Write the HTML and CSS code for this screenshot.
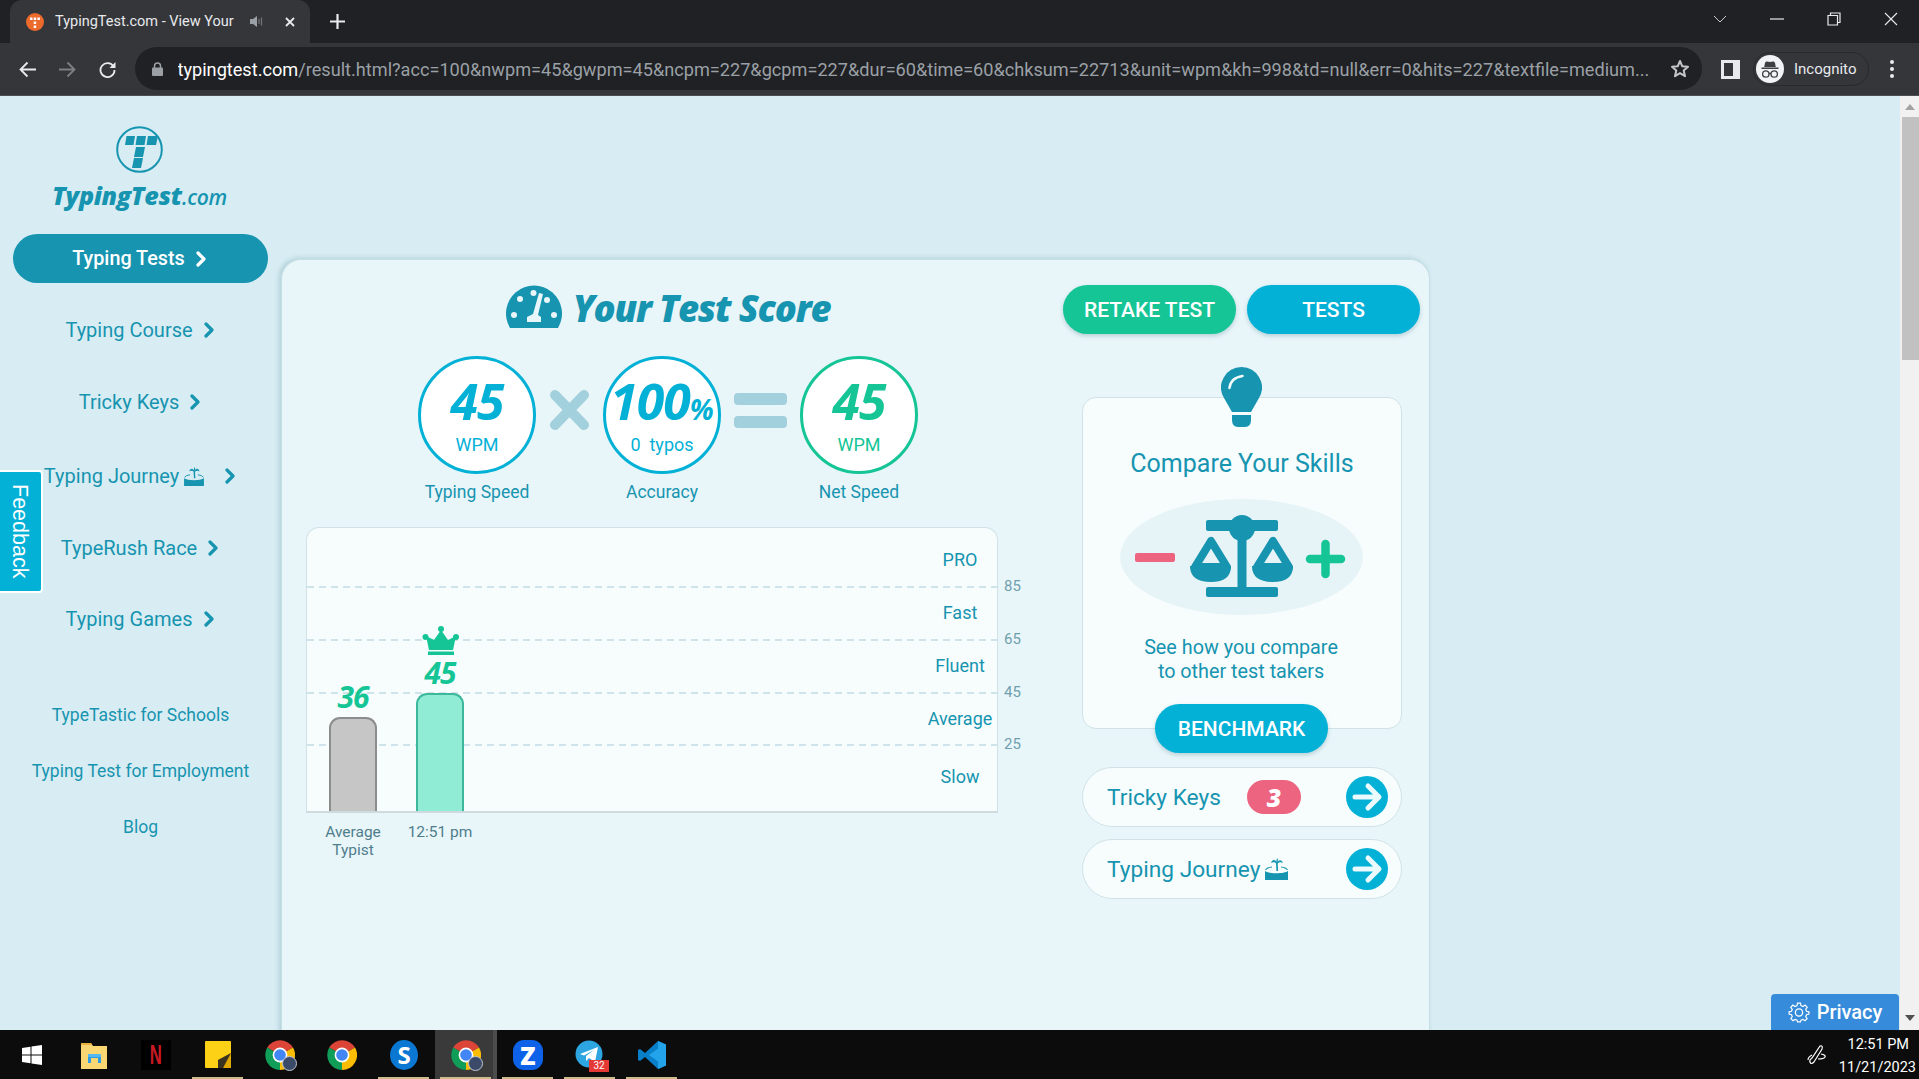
FILE: index.html
```html
<!DOCTYPE html>
<html lang="en">
<head>
<meta charset="utf-8">
<title>TypingTest.com - View Your Results</title>
<link rel="stylesheet" href="styles.css">
</head>
<body>
<svg class="defs" width="0" height="0" aria-hidden="true">
  <symbol id="chev" viewBox="0 0 10 16"><polyline points="2,2 8,8 2,14" fill="none" stroke="currentColor" stroke-width="3.2" stroke-linecap="round" stroke-linejoin="round"/></symbol>
  <symbol id="island" viewBox="0 0 23 22">
    <path d="M0 13C4 16 19 16 23 13V22H0Z" fill="#1694b0"/>
    <path d="M.5 12Q2 9.500 7 9M22.500 12Q21 9.500 16 9" fill="none" stroke="#1694b0" stroke-width="1.100"/>
    <path d="M11.800 5L12.300 13" stroke="#1694b0" stroke-width="1.700" fill="none"/>
    <path d="M12 4.500C10 1 7 1.500 6 5C8 3.800 10 4.200 12 6C14 4.200 16 3.800 18 5.200C17 1.500 14 1 12 4.500ZM12 4.500C11.300 3 11.300 1.500 12.300 0C13.200 1.500 13 3 12 4.500Z" fill="#1694b0"/>
  </symbol>
  <symbol id="arrow" viewBox="0 0 42 42">
    <circle cx="21" cy="21" r="21" fill="#03b1d7"/>
    <path d="M9 21H32M22 10L33 21L22 32" fill="none" stroke="#eafafd" stroke-width="5" stroke-linecap="round" stroke-linejoin="round"/>
  </symbol>
  <symbol id="chrome" viewBox="0 0 30 30">
    <path d="M15 15L2.200 7.600A15 15 0 0 1 28 7.500Z" fill="#db4437"/>
    <path d="M15 15L28 7.500A15 15 0 0 1 15 30Z" fill="#fbbc04"/>
    <path d="M15 15L15 30A15 15 0 0 1 2.200 7.600Z" fill="#0f9d58"/>
    <circle cx="15" cy="15" r="7.400" fill="#fff"/>
    <circle cx="15" cy="15" r="5.800" fill="#4285f4"/>
  </symbol>
</svg>

<div class="window">
  <header class="tabstrip">
    <div class="tab">
      <svg class="favicon" viewBox="0 0 18 18"><circle cx="9" cy="9" r="9" fill="#ec6a2c"/><g fill="#fff"><rect x="4" y="4.500" width="2.500" height="2.500"/><rect x="7.700" y="4.500" width="2.500" height="2.500"/><rect x="11.400" y="4.500" width="2.500" height="2.500"/><rect x="7.700" y="8.500" width="2.500" height="2.500"/><rect x="7.700" y="12.500" width="2.500" height="2.500"/></g></svg>
      <span class="tab-title">TypingTest.com - View Your</span>
      <svg class="speaker" viewBox="0 0 13 13"><path d="M0 4H3L7 1V12L3 9H0Z" fill="#9aa0a6"/><path d="M9 4V9M11.500 2.500V10.500" stroke="#70757a" stroke-width="1.200"/></svg>
      <svg class="tab-x" viewBox="0 0 10 10"><path d="M1 1L9 9M9 1L1 9" stroke="#e8eaed" stroke-width="1.800"/></svg>
    </div>
    <svg class="newtab" viewBox="0 0 15 15"><path d="M7.500 0V15M0 7.500H15" stroke="#e8eaed" stroke-width="2.200"/></svg>
    <div class="winctl">
      <svg class="w-ico" viewBox="0 0 14 8"><path d="M1 1L7 7L13 1" fill="none" stroke="#c8cacd" stroke-width="1"/></svg>
      <svg class="w-ico" viewBox="0 0 14 8"><path d="M0 4H14" stroke="#e8eaed" stroke-width="1.200"/></svg>
      <svg class="w-ico w-rest" viewBox="0 0 14 14"><path d="M3.500 3V1H13V10.500H10.500M1 3.500H10.500V13H1Z" fill="none" stroke="#e8eaed" stroke-width="1.200"/></svg>
      <svg class="w-ico w-rest" viewBox="0 0 14 14"><path d="M1 1L13 13M13 1L1 13" stroke="#e8eaed" stroke-width="1.100"/></svg>
    </div>
  </header>

  <div class="toolbar">
    <svg class="tb-ico" viewBox="0 0 17 16"><path d="M17 8H2M8.500 1L1.500 8L8.500 15" fill="none" stroke="#e8eaed" stroke-width="1.800"/></svg>
    <svg class="tb-ico" viewBox="0 0 17 16"><path d="M0 8H15M8.500 1L15.500 8L8.500 15" fill="none" stroke="#7c7f84" stroke-width="1.800"/></svg>
    <svg class="tb-ico" viewBox="0 0 17 17"><path d="M14.500 5.500A7 7 0 1 0 15.500 9" fill="none" stroke="#e8eaed" stroke-width="1.800"/><path d="M16.500 1V7H10.500Z" fill="#e8eaed"/></svg>
    <div class="omnibox">
      <svg class="lock" viewBox="0 0 11 14"><path d="M2.500 6V4A3 3 0 0 1 8.500 4V6" fill="none" stroke="#9aa0a6" stroke-width="1.500"/><rect y="5.500" width="11" height="8.500" rx="1" fill="#9aa0a6"/></svg>
      <div class="url"><span class="host">typingtest.com</span>/result.html?acc=100&amp;nwpm=45&amp;gwpm=45&amp;ncpm=227&amp;gcpm=227&amp;dur=60&amp;time=60&amp;chksum=22713&amp;unit=wpm&amp;kh=998&amp;td=null&amp;err=0&amp;hits=227&amp;textfile=medium...</div>
      <svg class="star" viewBox="0 0 20 19"><path d="M10 2L12.300 7.300L18 7.800L13.700 11.600L15 17.200L10 14.200L5 17.200L6.300 11.600L2 7.800L7.700 7.300Z" fill="none" stroke="#c4c7ca" stroke-width="2" stroke-linejoin="round"/></svg>
    </div>
    <svg class="sidepanel" viewBox="0 0 19 19"><path d="M0 0H19V19H0ZM3 3V16H12V3Z" fill="#e8eaed" fill-rule="evenodd"/></svg>
    <div class="profile">
      <svg class="avatar" viewBox="0 0 28 28"><circle cx="14" cy="14" r="14" fill="#f1f3f4"/><path d="M9 8Q9.500 6 11 6.500L14 7L17 6.500Q18.500 6 19 8L19.800 12H8.200ZM5.500 12.500H22.500V14H5.500Z" fill="#3c4043"/><circle cx="9.800" cy="19" r="3.200" fill="none" stroke="#3c4043" stroke-width="1.300"/><circle cx="18.200" cy="19" r="3.200" fill="none" stroke="#3c4043" stroke-width="1.300"/><path d="M13 18.500H15" stroke="#3c4043" stroke-width="1.300"/></svg>
      <span class="profile-name">Incognito</span>
    </div>
    <svg class="dots" viewBox="0 0 6 20"><circle cx="3" cy="3" r="2" fill="#e8eaed"/><circle cx="3" cy="10" r="2" fill="#e8eaed"/><circle cx="3" cy="17" r="2" fill="#e8eaed"/></svg>
  </div>

  <div class="page">
    <aside class="sidebar">
      <a class="logo">
        <svg class="logo-mark" viewBox="0 0 47 47"><circle cx="23.500" cy="23.500" r="22.300" fill="none" stroke="#1694b0" stroke-width="2"/><g fill="#1694b0"><path d="M10.500 10H19L17.500 19H9Z"/><path d="M21 10H30L28.500 19H19.500Z"/><path d="M32 10H42L40 19H30.500Z"/><path d="M20 21H29L27 31H18Z"/><path d="M18 32H27L25 42H16Z"/></g></svg>
        <span class="logo-text">TypingTest<span class="logo-com">.com</span></span>
      </a>
      <nav class="nav">
        <a class="nav-pill">Typing Tests<svg class="chev"><use href="#chev"/></svg></a>
        <a class="nav-item">Typing Course<svg class="chev"><use href="#chev"/></svg></a>
        <a class="nav-item">Tricky Keys<svg class="chev"><use href="#chev"/></svg></a>
        <a class="nav-item nav-journey">Typing Journey<svg class="island-s"><use href="#island"/></svg><svg class="chev chev-far"><use href="#chev"/></svg></a>
        <a class="nav-item">TypeRush Race<svg class="chev"><use href="#chev"/></svg></a>
        <a class="nav-item nav-last">Typing Games<svg class="chev"><use href="#chev"/></svg></a>
      </nav>
      <div class="sublinks">
        <a>TypeTastic for Schools</a>
        <a>Typing Test for Employment</a>
        <a>Blog</a>
      </div>
    </aside>

    <main class="card">
      <section class="results">
        <div class="title-row">
          <svg class="gauge" viewBox="0 0 56 44"><path d="M4 44A28 28 0 1 1 52 44Z" fill="#1694b0"/><g fill="#e9f6f9"><circle cx="27.500" cy="9" r="3"/><circle cx="14" cy="15" r="3"/><circle cx="41" cy="16" r="3"/><circle cx="8" cy="31" r="3"/><circle cx="48" cy="31" r="3"/><path d="M33 9L37 10L32 31L35 33V38H21V33L27 30Z"/></g></svg>
          <h1 class="title">Your Test Score</h1>
        </div>
        <div class="formula">
          <div class="stat">
            <div class="ring ring-blue"><b class="num">45</b><span class="unit">WPM</span></div>
            <span class="stat-label">Typing Speed</span>
          </div>
          <svg class="op-x" viewBox="0 0 41 42"><path d="M6 6L35 36M35 6L6 36" stroke="#a2d0dc" stroke-width="10" stroke-linecap="round"/></svg>
          <div class="stat">
            <div class="ring ring-blue"><b class="num">100<small class="pct">%</small></b><span class="unit unit-typos">0 &nbsp;typos</span></div>
            <span class="stat-label">Accuracy</span>
          </div>
          <div class="op-eq"><i></i><i></i></div>
          <div class="stat">
            <div class="ring ring-green"><b class="num">45</b><span class="unit">WPM</span></div>
            <span class="stat-label">Net Speed</span>
          </div>
        </div>
        <div class="chart-wrap">
          <div class="chart">
            <div class="band band-pro"><span class="band-name">PRO</span><span class="tick">85</span></div>
            <div class="band band-mid"><span class="band-name">Fast</span><span class="tick">65</span></div>
            <div class="band band-mid"><span class="band-name">Fluent</span><span class="tick">45</span></div>
            <div class="band band-mid"><span class="band-name">Average</span><span class="tick">25</span></div>
            <div class="band band-slow"><span class="band-name">Slow</span></div>
            <div class="bars">
              <div class="bar-col">
                <b class="bar-val">36</b>
                <div class="bar bar-gray"></div>
              </div>
              <div class="bar-col">
                <svg class="crown" viewBox="0 0 37 29"><circle cx="19" cy="3" r="3" fill="#15c596"/><circle cx="3.500" cy="11" r="3" fill="#15c596"/><circle cx="34" cy="11" r="3" fill="#15c596"/><path d="M19 4L26 14L34 10L31 24H7L4 10L12 14Z" fill="#15c596"/><rect x="6" y="25.500" width="26" height="3.500" fill="#15c596"/></svg>
                <b class="bar-val bar-val-top">45</b>
                <div class="bar bar-green"></div>
              </div>
            </div>
          </div>
          <div class="xlabels">
            <span class="xlabel">Average<br>Typist</span>
            <span class="xlabel">12:51 pm</span>
          </div>
        </div>
      </section>

      <section class="side">
        <div class="btn-row">
          <a class="btn btn-green">RETAKE TEST</a>
          <a class="btn btn-blue">TESTS</a>
        </div>
        <div class="compare">
          <svg class="bulb" viewBox="0 0 41 61"><path d="M20.500 0A20.500 20.500 0 0 1 38 31L30 45H11L3 31A20.500 20.500 0 0 1 20.500 0Z" fill="#1694b0"/><path d="M11 48H30V53Q30 60 24 60H17Q11 60 11 53Z" fill="#1694b0"/><path d="M8.500 21Q9.500 11 21.500 9" fill="none" stroke="#f3fcfd" stroke-width="2.500" stroke-linecap="round"/></svg>
          <h2 class="compare-title">Compare Your Skills</h2>
          <svg class="scale" viewBox="0 0 243 116">
            <ellipse cx="121.500" cy="58" rx="121.500" ry="58" fill="#e7f4f7"/>
            <rect x="15" y="54" width="40" height="9" rx="2" fill="#ec6480"/>
            <path d="M190 60H221M205.500 45V75" stroke="#15c596" stroke-width="8.500" stroke-linecap="round"/>
            <rect x="86" y="21" width="72" height="11" rx="2" fill="#1694b0"/>
            <circle cx="122" cy="29" r="13" fill="#1694b0"/>
            <rect x="117.500" y="30" width="9" height="60" fill="#1694b0"/>
            <rect x="86" y="88" width="72" height="10" rx="2" fill="#1694b0"/>
            <path d="M91 42L75 68H107Z" fill="none" stroke="#1694b0" stroke-width="8" stroke-linejoin="round"/>
            <path d="M70 67Q70 83 91 83Q111 83 111 67Z" fill="#1694b0"/>
            <path d="M153 42L137 68H169Z" fill="none" stroke="#1694b0" stroke-width="8" stroke-linejoin="round"/>
            <path d="M132 67Q132 83 153 83Q173 83 173 67Z" fill="#1694b0"/>
          </svg>
          <p class="compare-text">See how you compare<br>to other test takers</p>
          <a class="btn btn-blue btn-bench">BENCHMARK</a>
        </div>
        <a class="link-row">
          <span class="link-text">Tricky Keys</span>
          <b class="badge">3</b>
          <svg class="go"><use href="#arrow"/></svg>
        </a>
        <a class="link-row">
          <span class="link-text">Typing Journey</span>
          <svg class="island-l"><use href="#island"/></svg>
          <svg class="go"><use href="#arrow"/></svg>
        </a>
      </section>
    </main>

    <div class="scrollbar">
      <span class="sb-up"></span>
      <div class="sb-thumb"></div>
      <span class="sb-down"></span>
    </div>

    <a class="feedback">Feedback</a>
    <a class="privacy">
      <svg class="gear" viewBox="0 0 20 20"><path d="M8.500 1H11.500L12 3.500L14 4.400L16.200 3L18.300 5.200L16.800 7.300L17.600 9.300L20 9.800V12L17.600 12.700L16.800 14.600L18.200 16.800L16 18.800L14 17.400L12 18.200L11.500 20H8.500L8 18.200L6 17.400L4 18.800L1.800 16.800L3.200 14.600L2.400 12.700L0 12V9.800L2.400 9.300L3.200 7.300L1.700 5.200L3.800 3L6 4.400L8 3.500Z" fill="none" stroke="#fff" stroke-width="1.200" transform="translate(1 1) scale(.9)"/><circle cx="10" cy="10.500" r="3.300" fill="none" stroke="#fff" stroke-width="1.200"/></svg>
      Privacy
    </a>
  </div>

  <footer class="taskbar">
    <div class="task"><svg class="t-ico t-win" viewBox="0 0 20 20"><path d="M0 3L8.500 1.800V9.500H0ZM9.500 1.600L20 0V9.500H9.500ZM0 10.500H8.500V18.200L0 17ZM9.500 10.500H20V20L9.500 18.400Z" fill="#fff"/></svg></div>
    <div class="task"><svg class="t-ico" viewBox="0 0 28 30"><path d="M1 3H11L13 6H27V29H1Z" fill="#fbd774"/><path d="M1 3H11L12 5H1Z" fill="#e8b13f"/><path d="M8 23V16Q8 14 10 14H19Q21 14 21 16V23H18V18H11V23Z" fill="#2f9ce6"/><rect x="8" y="14" width="13" height="3" fill="#55b9f0"/></svg></div>
    <div class="task"><span class="t-netflix"><span class="t-n">N</span></span></div>
    <div class="task task-on"><svg class="t-sticky" viewBox="0 0 26 27"><rect width="26" height="27" rx="1" fill="#fcd116"/><path d="M13 27V19L26 12V26Q26 27 25 27Z" fill="#e0a800"/><path d="M13 27V19L26 12L18 27Z" fill="#3a3320"/></svg></div>
    <div class="task"><span class="t-chrome"><svg class="t-ico"><use href="#chrome"/></svg><i class="t-dot"></i></span></div>
    <div class="task"><svg class="t-ico"><use href="#chrome"/></svg></div>
    <div class="task task-on"><span class="t-skype">S</span></div>
    <div class="task task-on task-active"><span class="t-chrome"><svg class="t-ico"><use href="#chrome"/></svg><i class="t-dot"></i></span></div>
    <div class="task task-on"><span class="t-zoom">Z</span></div>
    <div class="task task-on"><span class="t-tg"><svg class="t-ico" viewBox="0 0 30 30"><circle cx="14" cy="14" r="13.500" fill="#2ca5e0"/><path d="M5 14L23 7L20 22L14 18L11 21L11 16L19 10L9 15.500Z" fill="#fff"/></svg><i class="t-count">32</i></span></div>
    <div class="task task-on"><svg class="t-ico" viewBox="0 0 30 30"><path d="M21 1L29 4.500V25.500L21 29L8 17L3 21L1 20V10L3 9L8 13Z" fill="#0a7fc9"/><path d="M21 1L29 4.500V25.500L21 29ZM21 8.500L12 15L21 21.500Z" fill="#23a3ea" fill-rule="evenodd"/></svg></div>
    <div class="tray">
      <svg class="pen" viewBox="0 0 20 20"><path d="M13 1Q16 0 15 4L7 17Q4 20 3 17Q2 15 5 13ZM5 10Q1 12 1 15M14 9Q19 10 18 12Q17 14 11 14" fill="none" stroke="#fff" stroke-width="1.200"/></svg>
      <div class="clock"><span>12:51 PM</span><span>11/21/2023</span></div>
    </div>
  </footer>
</div>
</body>
</html>
```
FILE: styles.css
```css
* { box-sizing: border-box; }
html, body { margin: 0; padding: 0; height: 100%; overflow: hidden; }
body { font-family: Roboto, "Liberation Sans", sans-serif; background: #202124; }
a { color: inherit; text-decoration: none; }
.defs { position: absolute; }

.window { display: flex; flex-direction: column; width: 1919px; height: 1079px; }

/* tab strip */
.tabstrip { height: 43px; flex: none; background: #202124; display: flex; align-items: stretch; padding-left: 10px; }
.tab { width: 300px; background: #35363a; border-radius: 12px 12px 0 0; display: flex; align-items: center; padding-left: 16px; }
.favicon { width: 18px; height: 18px; flex: none; }
.tab-title { width: 182px; margin-left: 11px; font-size: 14.500px; color: #e8eaed; white-space: nowrap; }
.speaker { width: 13px; height: 13px; margin-left: 13px; flex: none; }
.tab-x { width: 10px; height: 10px; margin-left: 22px; flex: none; }
.newtab { width: 15px; height: 15px; align-self: center; margin-left: 20px; }
.winctl { margin-left: auto; display: flex; align-items: center; gap: 43px; padding: 0 21px 6px 0; }
.w-ico { width: 14px; height: 8px; }
.w-rest { height: 14px; }

/* toolbar */
.toolbar { height: 53px; flex: none; background: #35363a; border-bottom: 1px solid #4c4e52; display: flex; align-items: center; padding-left: 19px; }
.tb-ico { width: 17px; height: 17px; margin-right: 23px; flex: none; }
.omnibox { width: 1567px; height: 43px; margin-left: -4px; margin-top: -1px; background: #202124; border-radius: 22px; display: flex; align-items: center; padding-left: 17px; }
.lock { width: 11px; height: 14px; flex: none; }
.url { width: 1473px; margin-left: 14.500px; padding-top: 2px; flex: none; font-size: 18.150px; color: #9aa0a6; white-space: nowrap; overflow: hidden; }
.host { color: #fff; }
.star { width: 20px; height: 19px; margin-left: 19px; flex: none; }
.sidepanel { width: 19px; height: 19px; margin-left: 19px; flex: none; }
.profile { width: 116px; height: 34px; margin-left: 13px; border-radius: 17px; border: 1px solid #28292c; display: flex; align-items: center; padding-left: 2px; flex: none; }
.avatar { width: 28px; height: 28px; }
.profile-name { margin-left: 10px; font-size: 15px; color: #e8eaed; }
.dots { width: 6px; height: 20px; margin-left: 20px; flex: none; }

/* page */
.page { flex: 1; min-height: 0; position: relative; display: flex; background: #d8edf3; overflow: hidden; }

.sidebar { width: 281px; flex: none; display: flex; flex-direction: column; align-items: center; padding-top: 30px; color: #1694b0; }
.logo { display: flex; flex-direction: column; align-items: center; padding-right: 2px; }
.logo-mark { width: 47px; height: 47px; }
.logo-text { margin-top: 9px; height: 27px; font: italic 800 25px/27px "Open Sans", sans-serif; letter-spacing: -.3px; }
.logo-com { font-weight: 600; font-size: 21px; }
.nav { width: 100%; display: flex; flex-direction: column; align-items: center; margin-top: 25px; }
.nav-pill { width: 255px; height: 49px; border-radius: 25px; background: #1694b0; color: #fff; font-size: 19.800px; font-weight: 500; display: flex; align-items: center; justify-content: center; padding-right: 3px; margin-bottom: 11px; }
.nav-item { height: 72px; display: flex; align-items: center; justify-content: center; font-size: 20px; padding-right: 2px; }
.nav-journey { margin-top: 2px; }
.nav-last { height: 70px; }
.chev { width: 10px; height: 16px; margin-left: 11px; flex: none; }
.chev-far { margin-left: 21px; }
.island-s { width: 20px; height: 19px; margin-left: 5px; flex: none; }
.sublinks { display: flex; flex-direction: column; align-items: center; margin-top: 33px; font-size: 17.500px; }
.sublinks a { height: 56px; display: flex; align-items: center; }

/* card */
.card { width: 1149px; flex: none; margin-top: 163px; margin-bottom: -40px; background: #e9f6f9; border: 1px solid #c4dfe6; border-bottom: 0; border-radius: 20px 20px 0 0; box-shadow: -2px -1px 5px rgba(90, 140, 155, .3); display: flex; }
.results { width: 774px; flex: none; margin-left: -1px; display: flex; flex-direction: column; align-items: center; padding-top: 24px; }
.title-row { display: flex; align-items: center; height: 44px; gap: 11px; }
.gauge { width: 56px; height: 44px; }
.title { margin: 0; padding-top: 4px; font: italic 800 36.500px/44px "Open Sans", sans-serif; color: #1694b0; letter-spacing: -1.200px; white-space: nowrap; }
.formula { display: flex; align-items: flex-start; gap: 13px; margin-top: 28px; }
.stat { display: flex; flex-direction: column; align-items: center; width: 118px; }
.ring { width: 118px; height: 118px; border-radius: 50%; background: #fff; border: 3px solid #03b1d7; color: #03b1d7; display: flex; flex-direction: column; align-items: center; }
.ring-green { border-color: #15c596; color: #15c596; }
.num { height: 54px; font: italic 700 50px/54px "Open Sans", sans-serif; margin-top: 15px; white-space: nowrap; letter-spacing: -1px; }
.pct { font-size: 28px; line-height: 0; letter-spacing: 0; }
.unit { font-size: 18px; line-height: 22px; margin-top: 6px; }
.unit-typos { white-space: pre; }
.stat-label { margin-top: 7px; font-size: 17.500px; line-height: 22px; color: #1694b0; white-space: nowrap; }
.op-x { width: 41px; height: 42px; margin-top: 33px; flex: none; }
.op-eq { width: 53px; flex: none; margin-top: 37px; display: flex; flex-direction: column; gap: 11px; }
.op-eq i { display: block; height: 12px; border-radius: 4px; background: #a2d0dc; }

/* chart */
.chart-wrap { align-self: flex-start; margin-left: 25px; margin-top: 24px; width: 692px; }
.chart { position: relative; height: 286px; background: #f7fdfd; border: 1px solid #d0e2e8; border-bottom: 2px solid #cfdadf; border-radius: 13px 13px 0 0; display: flex; flex-direction: column; }
.band { position: relative; display: flex; align-items: center; justify-content: flex-end; background: repeating-linear-gradient(90deg, #cfe4ea 0 7px, transparent 7px 12px) left bottom / 100% 2px no-repeat; }
.band-pro { height: 60px; padding-top: 3px; }
.band-mid { height: 52.800px; padding-bottom: 3px; }
.band-slow { flex: 1; background: none; padding-bottom: 4px; }
.band-name { width: 70px; margin-right: 2px; text-align: center; font-size: 18px; color: #1694b0; white-space: nowrap; }
.tick { position: absolute; left: 100%; bottom: -7px; padding-left: 7px; font-size: 15px; line-height: 18px; color: #6f9fae; }
.bars { position: absolute; left: 22px; right: 0; bottom: 0; display: flex; align-items: flex-end; gap: 39px; }
.bar-col { width: 48px; display: flex; flex-direction: column; align-items: center; }
.bar { width: 48px; border-radius: 11px 11px 0 0; border: 2px solid; border-bottom: 0; }
.bar-gray { height: 94px; background: #c6c6c6; border-color: #8c8c8c; }
.bar-green { height: 118px; background: #90ecd4; border-color: #3db89c; }
.bar-val { font: italic 700 30px/36px "Open Sans", sans-serif; color: #15c596; letter-spacing: -1px; margin-bottom: 2px; }
.crown { width: 37px; height: 29px; }
.xlabels { display: flex; gap: 39px; padding-left: 23px; margin-top: 10px; }
.xlabel { width: 48px; display: flex; justify-content: center; text-align: center; font-size: 15.500px; line-height: 18px; color: #4f7d8c; white-space: nowrap; }

/* right side */
.side { flex: 1; display: flex; flex-direction: column; padding: 25px 0 0 8px; }
.btn-row { display: flex; gap: 11px; }
.btn { height: 49px; width: 173px; border-radius: 25px; color: #fff; font-size: 21px; font-weight: 500; display: flex; align-items: center; justify-content: center; box-shadow: 0 2px 4px rgba(60, 120, 140, .3); }
.btn-green { background: #15c596; }
.btn-blue { background: #03b1d7; }
.compare { position: relative; width: 320px; height: 332px; margin: 63px 0 0 19px; background: #f7fdfd; border: 1px solid #d0e2e8; border-radius: 14px; display: flex; flex-direction: column; align-items: center; }
.bulb { position: absolute; top: -31px; left: 138px; width: 41px; height: 61px; }
.compare-title { margin: 50px 0 0; font-size: 25px; line-height: 32px; font-weight: 400; color: #1694b0; }
.scale { width: 243px; height: 116px; margin: 19px 2px 0 0; }
.compare-text { margin: 21px 2px 0 0; font-size: 19.800px; line-height: 24px; text-align: center; color: #1694b0; }
.btn-bench { position: absolute; left: 72px; bottom: -25px; }
.link-row { width: 320px; height: 60px; margin: 38px 0 0 19px; border: 1px solid #d0e2e8; border-radius: 30px; background: #f7fdfd; color: #1694b0; display: flex; align-items: center; padding: 0 13px 0 24px; }
.link-row + .link-row { margin-top: 12px; }
.link-text { font-size: 22.700px; white-space: nowrap; }
.badge { width: 54px; height: 34px; margin-left: 26px; border-radius: 17px; background: #ec6480; color: #fff; font: italic 800 25px/34px "Open Sans", sans-serif; text-align: center; }
.island-l { width: 23px; height: 22px; margin-left: 5px; flex: none; }
.go { width: 42px; height: 42px; margin-left: auto; flex: none; }

/* scrollbar */
.scrollbar { width: 19px; flex: none; margin-left: auto; background: #f1f1f1; display: flex; flex-direction: column; align-items: flex-end; position: relative; }
.sb-up, .sb-down { width: 0; height: 0; position: absolute; left: 5px; border-left: 5px solid transparent; border-right: 5px solid transparent; }
.sb-up { top: 8px; border-bottom: 6px solid #a3a3a3; }
.sb-down { bottom: 9px; border-top: 6px solid #505050; }
.sb-thumb { width: 17px; height: 243px; margin-top: 21px; background: #c1c1c1; }

.feedback { position: absolute; left: -3px; top: 374px; width: 46px; height: 123px; background: #03b1d7; border: 2px solid #fff; border-radius: 0 4px 4px 0; color: #fff; font: 21.500px/42px "Liberation Sans", sans-serif; writing-mode: vertical-rl; text-align: center; }
.privacy { position: absolute; left: 1771px; bottom: 0; width: 128px; height: 36px; background: #368cda; border-radius: 4px 4px 0 0; color: #fff; font-size: 20px; font-weight: 500; display: flex; align-items: center; justify-content: center; gap: 7px; }
.gear { width: 22px; height: 22px; }

/* taskbar */
.taskbar { height: 49px; flex: none; background: #0c0c0c; display: flex; padding-left: 1px; }
.task { width: 62px; flex: none; position: relative; display: flex; align-items: center; justify-content: center; }
.task-on::after { content: ""; position: absolute; left: 5px; right: 6px; bottom: 0; height: 2px; background: #cdbb8c; }
.task-active { background: #3a3a3a; box-shadow: inset -4px 0 #4c4c4c; }
.t-ico { width: 30px; height: 30px; display: block; }
.t-win { width: 20px; height: 20px; }
.t-sticky { width: 26px; height: 27px; display: block; }
.t-netflix { width: 30px; height: 30px; background: #000; display: flex; align-items: center; justify-content: center; }
.t-n { color: #c81a22; font: 700 27px/30px "Liberation Sans", sans-serif; transform: scaleX(.62); }
.t-chrome, .t-tg { position: relative; display: block; width: 30px; height: 30px; }
.t-dot { position: absolute; right: -2px; bottom: -1px; width: 15px; height: 15px; border-radius: 50%; background: #3a4a68; border: 1px solid #c0c8d4; }
.t-skype { width: 28px; height: 30px; border-radius: 50%; background: #0a78d2; color: #fff; font: 700 24px/30px "Open Sans", sans-serif; text-align: center; }
.t-zoom { width: 30px; height: 30px; border-radius: 11px; background: #0d62e8; color: #fff; font: 800 25px/30px "Open Sans", sans-serif; text-align: center; }
.t-count { position: absolute; right: -4px; bottom: -2px; width: 20px; height: 12px; background: #e53935; color: #fff; font: normal 10px/12px Roboto, sans-serif; text-align: center; }
.tray { margin-left: auto; display: flex; align-items: center; padding-right: 3px; }
.pen { width: 20px; height: 20px; margin-right: 12px; }
.clock { display: flex; flex-direction: column; align-items: flex-end; margin-top: 3px; font-size: 14.500px; line-height: 23.500px; color: #fff; }
.clock span:first-child { padding-right: 7px; }
```
